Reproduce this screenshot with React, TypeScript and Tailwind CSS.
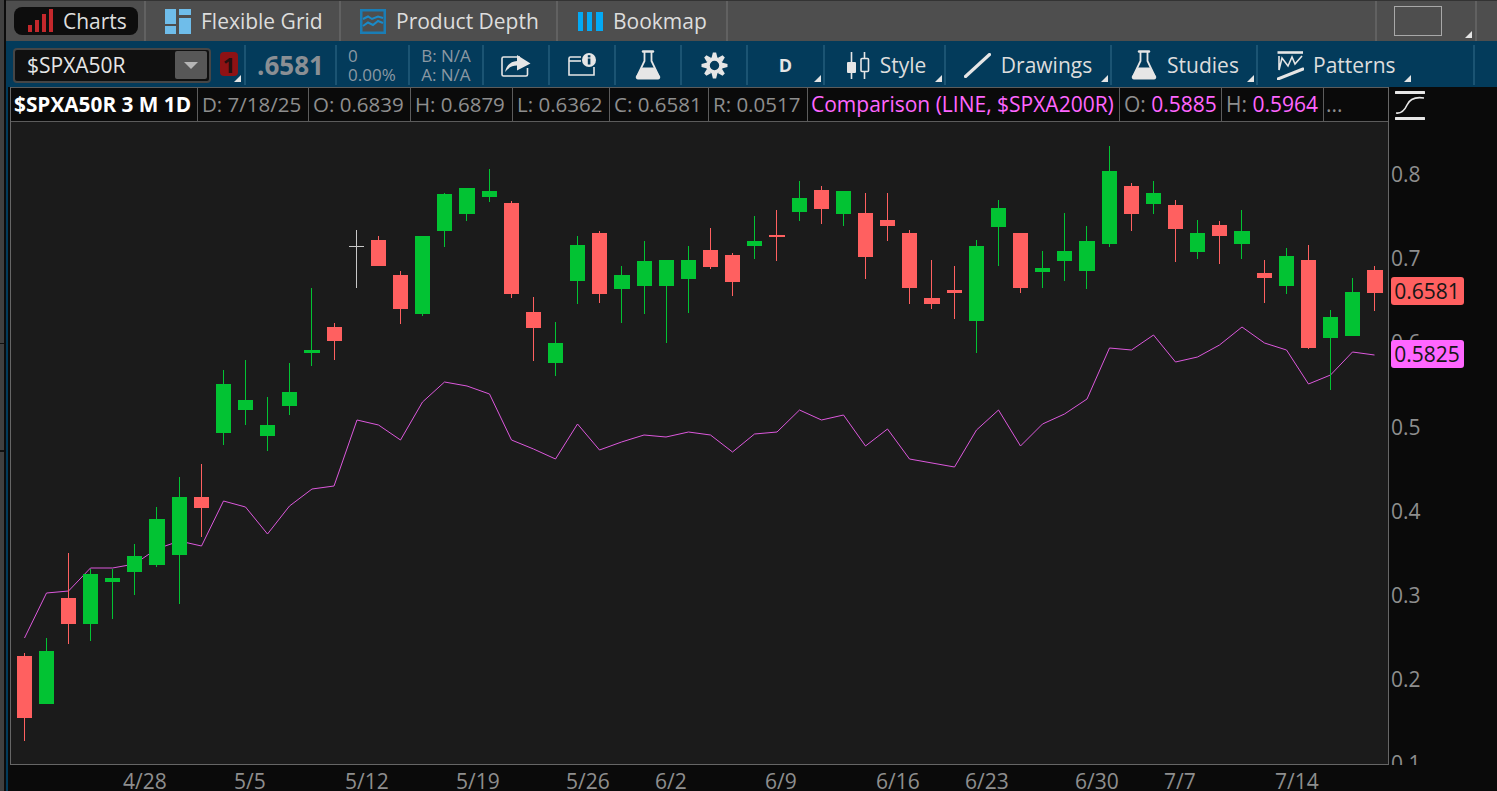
const G = "#02c333";
const R = "#ff6060";
const W = "#c8c8c8";

// left, right, bodyTop, bodyBottom, wickTop, wickBottom, colour
const candles: [number, number, number, number, number, number, string][] = [
  [17, 32, 656, 718, 653, 741, R], [39, 54, 651, 704, 638, 704, G], [61, 76, 598, 624, 553, 644, R], [83, 98, 574, 624, 569, 641, G],
  [105, 120, 578, 582, 569, 619, G], [127, 142, 556, 572, 544, 595, G], [149, 165, 519, 565, 507, 567, G], [172, 187, 497, 555, 477, 604, G],
  [194, 209, 497, 508, 464, 537, R], [216, 231, 384, 433, 370, 445, G], [238, 253, 400, 410, 360, 425, G], [260, 275, 425, 436, 397, 451, G],
  [282, 297, 392, 406, 363, 415, G], [304, 320, 350, 353, 288, 366, G], [327, 342, 327, 341, 323, 360, R], [349, 364, 246, 247, 230, 288, W],
  [371, 386, 240, 266, 236, 266, R], [393, 408, 275, 309, 271, 324, R], [415, 430, 236, 314, 236, 316, G], [437, 452, 194, 231, 193, 247, G],
  [459, 475, 188, 214, 188, 221, G], [482, 497, 191, 197, 169, 202, G], [504, 519, 203, 294, 201, 298, R], [526, 541, 312, 328, 297, 361, R],
  [548, 563, 343, 363, 322, 376, G], [570, 585, 245, 281, 236, 304, G], [592, 607, 233, 294, 231, 303, R], [614, 630, 275, 289, 266, 323, G],
  [637, 652, 261, 286, 241, 314, G], [659, 674, 260, 286, 260, 343, G], [681, 696, 260, 279, 246, 313, G], [703, 718, 250, 267, 228, 269, R],
  [725, 740, 255, 282, 253, 296, R], [747, 762, 241, 246, 216, 259, G], [769, 785, 235, 237, 210, 261, R], [792, 807, 198, 212, 181, 221, G],
  [814, 829, 190, 209, 186, 224, R], [836, 851, 191, 214, 191, 226, G], [858, 873, 213, 257, 193, 279, R], [880, 895, 220, 226, 193, 241, R],
  [902, 917, 233, 288, 230, 304, R], [924, 940, 298, 304, 260, 309, R], [947, 962, 290, 293, 266, 319, R], [969, 984, 246, 321, 240, 353, G],
  [991, 1006, 208, 227, 200, 266, G], [1013, 1028, 233, 288, 233, 293, R], [1035, 1050, 268, 272, 251, 288, G], [1057, 1072, 251, 261, 213, 281, G],
  [1079, 1095, 241, 271, 226, 289, G], [1102, 1117, 171, 244, 146, 247, G], [1124, 1139, 186, 214, 183, 231, R], [1146, 1161, 193, 204, 181, 214, G],
  [1168, 1183, 205, 229, 200, 262, R], [1190, 1205, 233, 252, 220, 259, G], [1212, 1227, 225, 236, 221, 264, R], [1234, 1250, 231, 244, 210, 259, G],
  [1257, 1272, 273, 278, 260, 303, R], [1279, 1294, 256, 286, 248, 294, G], [1301, 1316, 260, 348, 245, 349, R], [1323, 1338, 317, 338, 310, 390, G],
  [1345, 1360, 292, 336, 278, 336, G], [1367, 1383, 270, 293, 266, 311, R],
];

const line =
  "24.5,638 46.5,593 68.5,591 90.5,568 112.5,568 134.5,564 156.5,549 179.5,541 201.5,546 223.5,501 245.5,507 267.5,534 289.5,506 312,489 334,486 357,420 378.5,425 400.5,440 422.5,402 444.5,382 467,386 489.5,394 511.5,440 533.5,449 555.5,459 577.5,424 599.5,450 621.5,442 644,435 666,437 688.5,432 710.5,435 732.5,452 754.5,434 777,432 799.5,410 821.5,420 843.5,415 865.5,446 887.5,429 909.5,459 932,463 954.5,467 976.5,430 998.5,410 1020.5,446 1042.5,424 1064.5,414 1087,399 1109.5,348 1131.5,350 1153.5,335 1175.5,362 1197.5,357 1219.5,345 1242,327 1264.5,343 1286.5,350 1308.5,384 1330.5,375 1352.5,352 1374.5,355";

const yTicks: [string, number][] = [["0.8", 174], ["0.7", 258], ["0.6", 342], ["0.5", 427], ["0.4", 511], ["0.3", 595], ["0.2", 679], ["0.1", 763]];
const xTicks: [string, number][] = [["4/28", 123], ["5/5", 234], ["5/12", 345], ["5/19", 456], ["5/26", 566], ["6/2", 655], ["6/9", 765], ["6/16", 876], ["6/23", 965], ["6/30", 1075], ["7/7", 1164], ["7/14", 1275]];

function Corner({ className }: { className: string }) {
  return (
    <svg className={`absolute ${className}`} width="7" height="7" viewBox="0 0 7 7">
      <path d="M7 0V7H0Z" fill="#e4e4e4" />
    </svg>
  );
}

function Flask() {
  return (
    <svg width="26" height="30" viewBox="0 0 26 30">
      <path d="M8 1.5H18" stroke="#e6e6e6" strokeWidth="2.4" strokeLinecap="round" />
      <path d="M9.5 2V11L2 26.5H24L16.5 11V2" fill="none" stroke="#e6e6e6" strokeWidth="1.8" />
      <path d="M6.8 17.5H19.2L25 26.5Q25.5 29.5 23 29.5H3Q0.5 29.5 1 26.5Z" fill="#e6e6e6" />
    </svg>
  );
}

function ToolCell({ w, children, corner }: { w: string; children?: React.ReactNode; corner?: boolean }) {
  return (
    <div className={`relative flex h-[40px] shrink-0 items-center justify-center gap-[10px] border-r-2 border-[#1b5473] ${w}`}>
      {children}
      {corner && <Corner className="right-[2px] bottom-[3px]" />}
    </div>
  );
}

function Tab({ w, gap, icon, label }: { w: string; gap: string; icon: React.ReactNode; label: string }) {
  return (
    <div className={`flex h-full shrink-0 items-center border-r-2 border-[#616161] pl-[19px] ${w} ${gap}`}>
      {icon}
      <span>{label}</span>
    </div>
  );
}

function Cell({ w, label, value, pink }: { w: string; label?: string; value: string; pink?: boolean }) {
  return (
    <div className={`flex h-full shrink-0 items-center whitespace-pre border-r border-[#5c5c5c] ${label ? "pl-[4px]" : "pl-[3px]"} ${w} ${pink ? "text-[21px]" : "text-[20.5px]"}`}>
      {label && <span className="text-[#8e8e8e]">{label} </span>}
      <span className={pink ? "text-[#ff66ff]" : "text-[#8e8e8e]"}>{value}</span>
    </div>
  );
}

export default function App() {
  return (
    <div className="flex h-[791px] w-[1497px] overflow-hidden bg-black font-['Open_Sans',sans-serif] text-[21px] leading-none text-[#dddddd]">
      <div className="relative w-[4px] shrink-0 bg-[#404040]">
        <div className="absolute left-0 top-[343px] h-px w-full bg-[#111111]" />
        <div className="absolute left-0 top-[450px] h-[2px] w-full bg-[#111111]" />
      </div>
      <div className="w-[2px] shrink-0 bg-[#0c0c0c]" />
      <div className="flex min-w-0 flex-1 flex-col">
        {/* tabs */}
        <div className="flex h-[41px] shrink-0 border-t border-[#333333] bg-[#4e4e4e]">
          <div className="flex h-full w-[140px] shrink-0 items-center border-r-2 border-[#616161] pl-[8px]">
            <div className="flex h-[28px] w-[124px] items-center gap-[10px] rounded-[8px] bg-[#0d0d0d] pl-[14px]">
              <svg width="25" height="28" viewBox="0 0 25 28">
                <g fill="#c4282c">
                  <rect x="0" y="18" width="4" height="7" />
                  <rect x="7" y="13" width="4" height="12" />
                  <rect x="14" y="7" width="4" height="18" />
                  <rect x="21" y="2" width="4" height="23" />
                </g>
              </svg>
              <span>Charts</span>
            </div>
          </div>
          <Tab
            w="w-[195px]"
            gap="gap-[10px]"
            label="Flexible Grid"
            icon={
              <svg width="26" height="25" viewBox="0 0 26 25">
                <g fill="#6fbdea">
                  <rect x="0" y="0" width="11" height="15" />
                  <rect x="0" y="17" width="11" height="8" />
                  <rect x="14" y="0" width="12" height="6" />
                  <rect x="14" y="9" width="12" height="16" />
                </g>
              </svg>
            }
          />
          <Tab
            w="w-[217px]"
            gap="gap-[10px]"
            label="Product Depth"
            icon={
              <svg width="26" height="25" viewBox="0 0 26 25">
                <rect x="0" y="0" width="26" height="25" fill="#1a7db5" />
                <rect x="2.5" y="2.5" width="21" height="20" fill="#4e4e4e" />
                <path d="M3 10L8 7.5L12 10L18 7.5L23 9M3 17L8 13.5L13 16L18 12L23 14" fill="none" stroke="#1a8ac8" strokeWidth="2" />
              </svg>
            }
          />
          <div className="flex h-full w-[170px] shrink-0 items-center gap-[10px] border-r-2 border-[#616161] pl-[20px]">
            <svg width="25" height="19" viewBox="0 0 25 19">
              <g fill="#03a9f4">
                <rect x="0" y="0" width="5" height="19" />
                <rect x="9" y="0" width="5" height="19" />
                <rect x="18" y="0" width="7" height="19" />
              </g>
            </svg>
            <span>Bookmap</span>
          </div>
          <div className="flex-1 border-r-2 border-[#616161]" />
          <div className="relative flex h-full w-[100px] shrink-0 items-center border-r-2 border-[#616161] pl-[17px]">
            <div className="h-[30px] w-[48px] border border-[#a8a8a8]" />
            <Corner className="bottom-[3px] right-[3px]" />
          </div>
          <div className="w-[20px] shrink-0" />
        </div>

        {/* toolbar */}
        <div className="flex h-[46px] shrink-0 items-center bg-[#033b5b] pt-[2px]">
          <ToolCell w="w-[240px] !justify-start">
            <div className="ml-[7px] flex h-[35px] w-[198px] items-center justify-between rounded-[4px] border-2 border-[#464646] bg-[#101010] pl-[12px] pr-[2px]">
              <span className="text-[#e6e6e6]">$SPXA50R</span>
              <div className="flex h-[28px] w-[32px] items-center justify-center rounded-[2px] bg-[#575757]">
                <svg width="14" height="7" viewBox="0 0 14 7"><path d="M0 0H14L7 7Z" fill="#b5b5b5" /></svg>
              </div>
            </div>
            <div className="absolute left-[214px] top-[7px] flex h-[24px] w-[18px] items-center justify-center rounded-[4px] bg-[#8e1214] text-[22px] font-bold text-[#241010]">1</div>
            <Corner className="bottom-[3px] right-[3px]" />
          </ToolCell>
          <ToolCell w="w-[91px]">
            <span className="text-[26px] font-bold text-[#8a8f94]">.6581</span>
          </ToolCell>
          <ToolCell w="w-[73px] !justify-start">
            <div className="flex flex-col gap-[2px] pl-[11px] text-[17px] text-[#8b98a3]">
              <span>0</span>
              <span>0.00%</span>
            </div>
          </ToolCell>
          <ToolCell w="w-[74px]">
            <div className="flex flex-col gap-[2px] text-[17px] text-[#8b98a3]">
              <span>B: N/A</span>
              <span>A: N/A</span>
            </div>
          </ToolCell>
          <ToolCell w="w-[66px]">
            <svg width="30" height="24" viewBox="0 0 30 24">
              <path d="M19 4H2.5Q1 4 1 5.5V21.5Q1 23 2.5 23H25Q26.5 23 26.5 21.5V15" fill="none" stroke="#e6e6e6" strokeWidth="1.6" />
              <path d="M4 19Q6 9 16 8V2L29.5 10.5L16 17.5V12.5Q9 12.5 4 19Z" fill="#e6e6e6" />
            </svg>
          </ToolCell>
          <ToolCell w="w-[66px]">
            <svg width="28" height="24" viewBox="0 0 28 24">
              <path d="M13 4H2.5Q1 4 1 5.5V22H26V14" fill="none" stroke="#e6e6e6" strokeWidth="1.6" />
              <path d="M1 8H13" stroke="#e6e6e6" strokeWidth="1.6" />
              <circle cx="21" cy="7" r="7" fill="#e6e6e6" />
              <rect x="19.8" y="5.5" width="2.6" height="6" fill="#033b5b" />
              <rect x="19.8" y="2.2" width="2.6" height="2.2" fill="#033b5b" />
            </svg>
          </ToolCell>
          <ToolCell w="w-[66px]"><Flask /></ToolCell>
          <ToolCell w="w-[66px]">
            <svg width="27" height="27" viewBox="-13.5 -13.5 27 27">
              {[0, 45, 90, 135, 180, 225, 270, 315].map((a) => (
                <path key={a} d="M-3 -7.5L-1.6 -13H1.6L3 -7.5Z" fill="#e6e6e6" transform={`rotate(${a})`} />
              ))}
              <circle r="6.5" fill="none" stroke="#e6e6e6" strokeWidth="3.6" />
            </svg>
          </ToolCell>
          <ToolCell w="w-[77px]" corner>
            <span className="text-[18px] font-bold text-[#e6e6e6]">D</span>
          </ToolCell>
          <ToolCell w="w-[121px] pl-[4px]" corner>
            <svg width="23" height="27" viewBox="0 0 23 27">
              <path d="M4.5 0V27M17.5 0V27" stroke="#e6e6e6" strokeWidth="1.6" />
              <rect x="0" y="10" width="9" height="11" rx="1" fill="#e6e6e6" />
              <rect x="14" y="6.5" width="7.5" height="13" rx="1" fill="#033b5b" stroke="#e6e6e6" strokeWidth="1.6" />
            </svg>
            <span>Style</span>
          </ToolCell>
          <ToolCell w="w-[166px]" corner>
            <svg width="27" height="25" viewBox="0 0 27 25">
              <path d="M1.5 23.5L25.5 1.5" stroke="#e6e6e6" strokeWidth="3.2" strokeLinecap="round" />
            </svg>
            <span>Drawings</span>
          </ToolCell>
          <ToolCell w="w-[146px] pl-[2px]" corner>
            <Flask />
            <span>Studies</span>
          </ToolCell>
          <ToolCell w="w-[217px] !justify-start">
            <div className="flex items-center gap-[9px] pl-[19px]">
              <svg width="27" height="29" viewBox="0 0 27 29">
                <path d="M0.5 1.5H26" stroke="#e6e6e6" strokeWidth="2.6" />
                <path d="M2 5V19L5 7L11 15L15 6L18 13L25 5" fill="none" stroke="#e6e6e6" strokeWidth="1.6" />
                <path d="M1 28L26 18" stroke="#e6e6e6" strokeWidth="3" strokeLinecap="round" />
              </svg>
              <span>Patterns</span>
            </div>
            <Corner className="bottom-[3px] left-[146px]" />
          </ToolCell>
        </div>

        {/* body */}
        <div className="flex min-h-0 flex-1">
          <div className="w-[2px] shrink-0 bg-[#033b5b]" />
          <div className="flex min-w-0 flex-1 flex-col bg-[#0a0a0a] pl-[2px]">
            <div className="flex h-[678px] shrink-0">
              <div className="flex w-[1379px] shrink-0 flex-col border-x border-b border-[#666666]">
                <div className="flex h-[35px] shrink-0 items-center border-y border-[#5c5c5c] bg-[#0a0a0a]">
                  <div className="flex h-full w-[187px] shrink-0 items-center border-r border-[#5c5c5c] pl-[3px] text-[20.8px] font-bold text-white">$SPXA50R 3 M 1D</div>
                  <Cell w="w-[111px]" label="D:" value="7/18/25" />
                  <Cell w="w-[102px]" label="O:" value="0.6839" />
                  <Cell w="w-[102px]" label="H:" value="0.6879" />
                  <Cell w="w-[97px]" label="L:" value="0.6362" />
                  <Cell w="w-[99px]" label="C:" value="0.6581" />
                  <Cell w="w-[99px]" label="R:" value="0.0517" />
                  <Cell w="w-[312px]" value="Comparison (LINE, $SPXA200R)" pink />
                  <Cell w="w-[102px]" label="O:" value="0.5885" pink />
                  <Cell w="w-[102px]" label="H:" value="0.5964" pink />
                  <div className="pl-[2px] text-[#8e8e8e]">...</div>
                </div>
                <svg className="block min-h-0 flex-1 bg-[#1b1b1b]" viewBox="11 122 1377 642" width="1377" height="642">
                  <polyline points={line} fill="none" stroke="#dc58dc" strokeWidth="1" />
                  {candles.map(([l, r, bt, bb, wt, wb, c], i) => (
                    <g key={i} fill={c} shapeRendering="crispEdges">
                      <rect x={l + 7} y={wt} width="1" height={wb - wt} />
                      <rect x={l} y={bt} width={r - l} height={bb - bt} />
                    </g>
                  ))}
                </svg>
              </div>
              <div className="relative min-w-0 flex-1 overflow-hidden text-[#8e8e8e]">
                <svg className="absolute left-[6px] top-[3px]" width="30" height="30" viewBox="0 0 30 30">
                  <path d="M1 2.5H29M1 28.5H29" stroke="#e6e6e6" strokeWidth="3" strokeLinecap="round" />
                  <path d="M1 23Q8 24 12 15T29 8" fill="none" stroke="#e6e6e6" strokeWidth="1.6" />
                </svg>
                {yTicks.map(([t, y]) => (
                  <span key={t} className="absolute left-[2px]" style={{ top: y - 87 - 10 }}>{t}</span>
                ))}
                <div className="absolute left-[2px] top-[190px] flex h-[28px] w-[73px] items-center justify-center rounded-[3px] bg-[#ff6060] pr-[1px] text-[#161616]">0.6581</div>
                <div className="absolute left-[2px] top-[253px] flex h-[28px] w-[73px] items-center justify-center rounded-[3px] bg-[#ff66ff] pr-[1px] text-[#161616]">0.5825</div>
              </div>
            </div>
            <div className="relative min-h-0 flex-1 text-[#8e8e8e]">
              {xTicks.map(([t, x]) => (
                <span key={t} className="absolute top-[5px] leading-[22px]" style={{ left: x - 10 }}>{t}</span>
              ))}
            </div>
          </div>
        </div>
      </div>
    </div>
  );
}
